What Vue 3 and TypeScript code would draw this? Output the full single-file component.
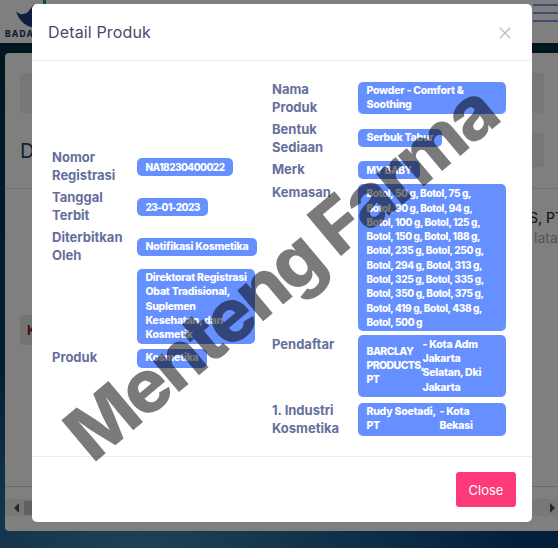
<script setup lang="ts">
interface Row { label: string; lines?: string[]; columns?: string[][]; wide?: boolean; num?: boolean; split?: number }
const leftRows: Row[] = [
  { label: 'Nomor<br>Registrasi', lines: ['NA18230400022'], num: true },
  { label: 'Tanggal<br>Terbit', lines: ['23-01-2023'], num: true },
  { label: 'Diterbitkan<br>Oleh', lines: ['Notifikasi Kosmetika'] },
  { label: '', lines: ['Direktorat Registrasi', 'Obat Tradisional,', 'Suplemen', 'Kesehatan, dan', 'Kosmetik'] },
  { label: 'Produk', lines: ['Kosmetika'] },
]
const rightRows: Row[] = [
  { label: 'Nama<br>Produk', lines: ['Powder - Comfort &', 'Soothing'], wide: true },
  { label: 'Bentuk<br>Sediaan', lines: ['Serbuk Tabur'] },
  { label: 'Merk', lines: ['MY BABY'], num: true },
  { label: 'Kemasan', wide: true, num: true, lines: ['Botol, 50 g, Botol, 75 g,', 'Botol, 90 g, Botol, 94 g,', 'Botol, 100 g, Botol, 125 g,', 'Botol, 150 g, Botol, 188 g,', 'Botol, 235 g, Botol, 250 g,', 'Botol, 294 g, Botol, 313 g,', 'Botol, 325 g, Botol, 335 g,', 'Botol, 350 g, Botol, 375 g,', 'Botol, 419 g, Botol, 438 g,', 'Botol, 500 g'] },
  { label: 'Pendaftar', wide: true, split: 56, columns: [['BARCLAY', 'PRODUCTS,', 'PT'], ['- Kota Adm', 'Jakarta', 'Selatan, Dki', 'Jakarta']] },
  { label: '1. Industri<br>Kosmetika', wide: true, split: 73, columns: [['Rudy Soetadi,', 'PT'], ['- Kota', 'Bekasi']] },
]
</script>

<template>
  <div class="page">
    <div class="bg">
      <header class="topbar">
        <div class="logo">
          <svg class="logo-mark" width="46" height="28" viewBox="0 0 46 28" aria-hidden="true">
            <path d="M16 11 C19 15 24 15 28 12 L34 4 L34 28 L28 26 C22 23 18 18 16 11 Z" fill="#1a3f78" />
            <path d="M43 0 L46 0 L46 4 L43 4 Z" fill="#1f9a5a" />
          </svg>
          <span class="logo-text">BADAN</span>
        </div>
        <div class="burger"><i></i><i></i><i></i></div>
      </header>
      <main class="card">
        <div class="filter"></div>
        <div class="head-row">
          <h2 class="heading">Data</h2>
          <div class="filter-right"></div>
        </div>
        <div class="rule"></div>
        <div class="cell">
          <div class="cell-a">S, PT</div>
          <div class="cell-b">latar</div>
        </div>
        <div class="chip"><b>K</b></div>
        <div class="rule bottom"></div>
        <div class="scroll">
          <span class="arrow left"></span>
          <span class="thumb"></span>
          <span class="arrow right"></span>
        </div>
      </main>
    </div>
    <div class="overlay"></div>

    <section class="modal">
      <header class="modal-head">
        <h1>Detail Produk</h1>
        <svg class="close-x" width="12" height="12" viewBox="0 0 12 12" aria-label="close">
          <path d="M.8.8l10.4 10.4M11.2.8L.8 11.2" stroke="#b9bcc9" stroke-width="1.3" fill="none" />
        </svg>
      </header>
      <div class="modal-body">
        <div class="col col-left">
          <div v-for="(r, i) in leftRows" :key="i" class="row">
            <div class="label" v-html="r.label"></div>
            <div class="val"><div class="badge" :class="{ num: r.num }"><span v-for="l in r.lines" :key="l">{{ l }}</span></div></div>
          </div>
        </div>
        <div class="col col-right">
          <div v-for="(r, i) in rightRows" :key="i" class="row">
            <div class="label" v-html="r.label"></div>
            <div class="val">
              <div class="badge" :class="{ wide: r.wide, num: r.num }">
                <template v-if="r.lines"><span v-for="l in r.lines" :key="l">{{ l }}</span></template>
                <div v-else class="cols">
                  <div v-for="(c, j) in r.columns" :key="j" class="subcol" :style="j === 0 ? { width: r.split + 'px' } : undefined"><span v-for="l in c" :key="l">{{ l }}</span></div>
                </div>
              </div>
            </div>
          </div>
        </div>
      </div>
      <footer class="modal-foot"><button class="close-btn">Close</button></footer>
    </section>

    <div class="watermark">Menteng Farma</div>
  </div>
</template>

<style>
html, body { margin: 0; padding: 0; }
</style>

<style scoped>
.page {
  position: relative;
  width: 558px;
  height: 548px;
  overflow: hidden;
  font-family: Inter, "Liberation Sans", sans-serif;
}
.bg {
  height: 548px;
  background:
    radial-gradient(ellipse 70% 35% at 25% 100%, #3e84ae 0%, rgba(62, 132, 174, 0) 100%),
    linear-gradient(180deg, #002a3c 0%, #003c5c 50%, #05407a 100%);
}
.topbar {
  height: 43px;
  background: #fff;
  display: flex;
  justify-content: space-between;
}
.logo { position: relative; width: 60px; }
.logo-mark { position: absolute; left: 0; top: 0; }
.logo-text {
  position: absolute;
  left: 5px;
  top: 29px;
  font-size: 8.5px;
  line-height: 10px;
  font-weight: 800;
  letter-spacing: 1.2px;
  color: #1a3f78;
}
.burger {
  display: flex;
  flex-direction: column;
  gap: 6px;
  width: 25px;
  padding-top: 4px;
}
.burger i { display: block; height: 2px; background: #7a9ce8; }
.card {
  margin: 10px -20px 0 5px;
  height: 478px;
  background: #fff;
  border-radius: 4px;
  overflow: hidden;
  box-sizing: border-box;
  padding-top: 20px;
}
.filter { height: 40px; margin: 0 34px 0 15px; background: #efefef; border-radius: 4px; }
.head-row {
  display: flex;
  justify-content: space-between;
  margin: 20px 34px 0 15px;
  height: 34px;
}
.heading {
  margin: 6px 0 0;
  font-size: 20px;
  line-height: 24px;
  font-weight: 400;
  color: #1a3f78;
}
.filter-right { width: 200px; background: #efefef; border-radius: 4px; }
.rule { height: 1px; margin-top: 21px; background: #e4e4e4; }
.cell { margin-left: 524px; padding-top: 20px; white-space: nowrap; }
.cell-a { font-size: 14px; line-height: 18px; font-weight: 500; color: #333; }
.cell-b { font-size: 14px; line-height: 20px; color: #aaa; margin-top: 1px; margin-left: 5px; }
.chip {
  margin: 67px 0 0 15px;
  width: 100px;
  height: 30px;
  background: #e6e6e6;
  border-radius: 4px;
  font-size: 13px;
  line-height: 30px;
  color: #7a1f1f;
  padding-left: 7px;
  box-sizing: border-box;
}
.rule.bottom { margin-top: 141px; background: #d4d4d4; }
.scroll {
  margin-top: 12px;
  height: 17px;
  background: #f1f1f1;
  display: flex;
  align-items: center;
  padding: 0 0 0 9px;
  box-sizing: border-box;
  width: 553px;
}
.thumb { width: 60px; height: 14px; background: #c1c1c1; margin-left: 5px; }
.arrow { width: 0; height: 0; border-top: 5px solid transparent; border-bottom: 5px solid transparent; }
.arrow.left { border-right: 5px solid #505050; }
.arrow.right { border-left: 5px solid #505050; margin-left: auto; margin-right: 3px; }
.overlay { position: absolute; inset: 0; background: rgba(0, 0, 0, 0.5); }

.modal {
  position: absolute;
  left: 32px;
  top: 4px;
  width: 500px;
  height: 518px;
  background: #fff;
  border-radius: 5px;
  display: flex;
  flex-direction: column;
}
.modal-head {
  height: 56px;
  flex: none;
  box-sizing: content-box;
  border-bottom: 1px solid #ebedf2;
  display: flex;
  align-items: center;
  justify-content: space-between;
  padding: 0 21px 0 16px;
}
.modal-head h1 {
  margin: 0;
  font-size: 16px;
  font-weight: 400;
  letter-spacing: 0.15px;
  color: #4a4a68;
}
.close-x { margin-top: 1px; }
.modal-body {
  flex: 1;
  display: flex;
  padding: 19px 26px 0 20px;
  min-height: 0;
}
.col { display: flex; flex-direction: column; gap: 4px; }
.col-left { width: 220px; padding-top: 68px; box-sizing: border-box; flex: none; }
.col-right { flex: 1; }
.row { display: flex; }
.label {
  flex: none;
  width: 85px;
  font-size: 13px;
  line-height: 18px;
  font-weight: 700;
  color: #666f9c;
  white-space: nowrap;
}
.col-right .label { width: 86px; }
.val { display: flex; align-items: center; min-height: 18px; }
.col-left .row .badge { margin-top: 2px; }
.col-left .row:nth-child(n+4) .badge { margin-top: 1px; }
.col-right .row:nth-child(3) .badge { margin: 1px 0; }
.col-right .row:nth-child(4) .label { margin-top: -1px; }
.col-right .row:nth-child(4) .val,
.col-right .row:nth-child(5) .val { align-items: flex-start; }
.col-right .row:nth-child(5) .badge { height: 62px; display: flex; }
.col-right .row:nth-child(5) .subcol:first-child { letter-spacing: -0.6px; }
.badge {
  background: #6690ff;
  color: #fff;
  border-radius: 5px;
  padding: 2px 8.5px;
  font-size: 10.5px;
  line-height: 14.3px;
  font-weight: 800;
  letter-spacing: -0.25px;
  white-space: nowrap;
  box-sizing: border-box;
}
.badge.num { font-size: 10px; letter-spacing: -0.35px; }
.col-left .badge.num { letter-spacing: -0.55px; }
.badge > span { display: block; }
.badge.wide { width: 148px; }
.cols { display: flex; align-items: center; }
.subcol span { display: block; }
.subcol { flex: none; }
.modal-foot {
  height: 50px;
  flex: none;
  border-top: 1px solid #ebedf2;
  display: flex;
  justify-content: flex-end;
  align-items: flex-start;
  padding: 15px 16px 0 0;
}
.close-btn {
  width: 60px;
  height: 35px;
  border: 0;
  border-radius: 3px;
  background: #ff3a79;
  color: #fff;
  font: 400 13px Inter, sans-serif;
}
.watermark {
  position: absolute;
  left: 280px;
  top: 272px;
  transform: translate(-50%, -50%) rotate(-40deg);
  font-size: 74px;
  line-height: 1;
  font-weight: 800;
  letter-spacing: -3px;
  white-space: nowrap;
  color: rgba(0, 0, 0, 0.52);
  pointer-events: none;
}
</style>
